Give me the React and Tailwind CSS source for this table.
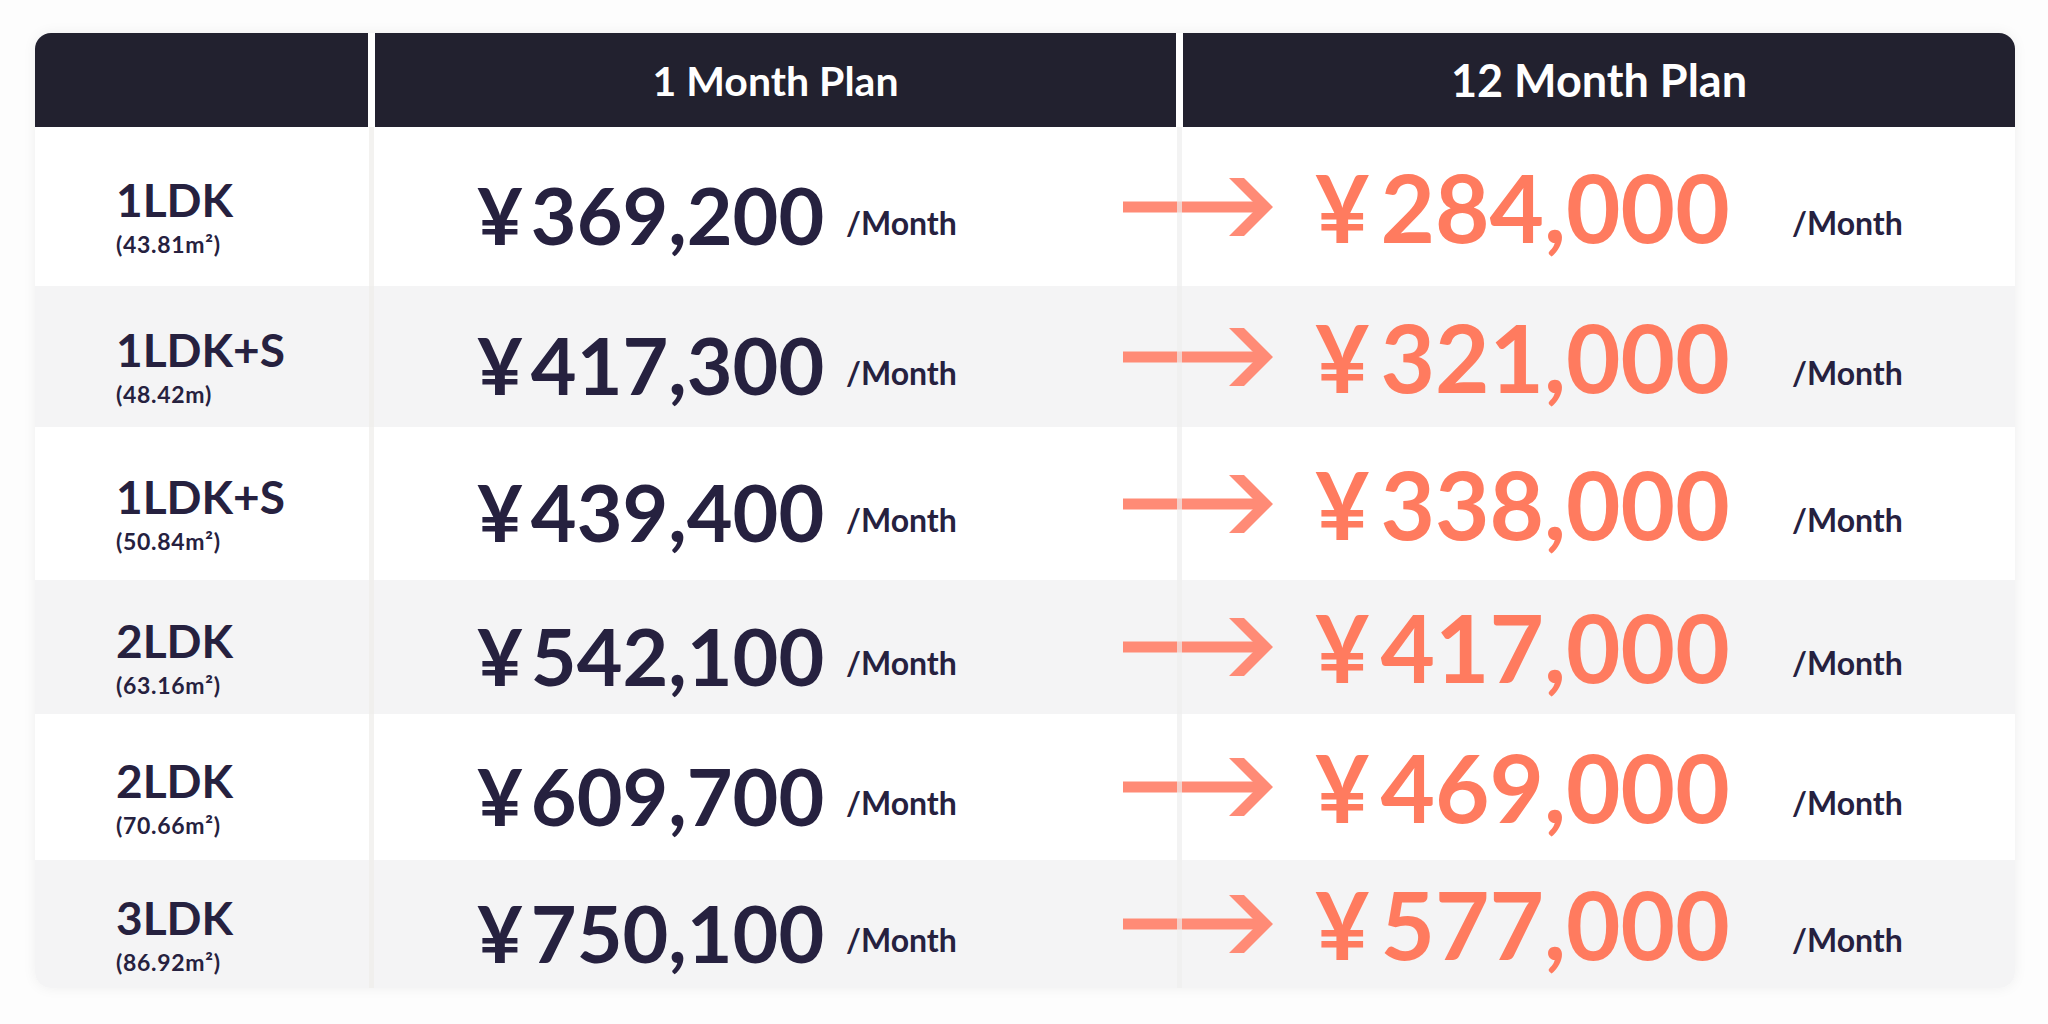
import React from 'react';

const rows = [
  { type: '1LDK', size: '(43.81m²)', month: '369,200', year: '284,000', h: 'h-[159px]', bg: 'bg-white' },
  { type: '1LDK+S', size: '(48.42m)', month: '417,300', year: '321,000', h: 'h-[141px]', bg: 'bg-[#f4f4f5]' },
  { type: '1LDK+S', size: '(50.84m²)', month: '439,400', year: '338,000', h: 'h-[153px]', bg: 'bg-white' },
  { type: '2LDK', size: '(63.16m²)', month: '542,100', year: '417,000', h: 'h-[134px]', bg: 'bg-[#f4f4f5]' },
  { type: '2LDK', size: '(70.66m²)', month: '609,700', year: '469,000', h: 'h-[146px]', bg: 'bg-white' },
  { type: '3LDK', size: '(86.92m²)', month: '750,100', year: '577,000', h: 'h-[128px]', bg: 'bg-[#f4f4f5]' },
];

function Arrow() {
  return (
    <svg width="152" height="62" viewBox="0 0 152 62" className="block">
      <rect x="0" y="25.5" width="140" height="11" fill="#ff8b76" />
      <polygon points="106,2 121,2 150,31 121,60 106,60 135,31" fill="#ff8b76" />
    </svg>
  );
}

export default function App() {
  return (
    <div className="min-h-screen w-full bg-[#fdfdfd] pt-[33px] pl-[35px]" style={{ fontFamily: 'Lato, "Noto Sans", sans-serif' }}>
      <div className="relative w-[1980px] rounded-[16px] overflow-hidden bg-white shadow-[0_0_14px_rgba(0,0,0,0.06)]">
        {/* header */}
        <div className="grid grid-cols-[333px_801px_1fr] gap-x-[7px] bg-white">
          <div className="h-[94px] bg-[#22212f]" />
          <div className="h-[94px] bg-[#22212f] flex items-center justify-center text-white text-[41px] font-bold leading-none">
            1 Month Plan
          </div>
          <div className="h-[94px] bg-[#22212f] flex items-center justify-center text-white text-[45px] font-bold leading-none">
            12 Month Plan
          </div>
        </div>

        {/* body */}
        <div className="relative">
          {rows.map((r, i) => (
            <div key={i} className={`grid grid-cols-[442px_369px_277px_192px_477px_1fr] items-center ${r.h} ${r.bg}`}>
              <div className="pl-[81px] pt-[20px] flex flex-col text-[#26213f]">
                <span className="text-[46px] font-bold leading-none">{r.type}</span>
                <span className="mt-[10px] text-[23px] font-bold leading-none tracking-[0.7px]">{r.size}</span>
              </div>
              <div className="pt-[16px] flex items-baseline text-[#26213f] font-bold leading-none">
                <span className="text-[79px] mr-[8px]">¥</span>
                <span className="text-[79px]">{r.month}</span>
              </div>
              <div className="pt-[32px] text-[32px] font-bold leading-none text-[#26213f]">/Month</div>
              <div className="flex items-center">
                <Arrow />
              </div>
              <div className="flex items-baseline text-[#ff7b5f] font-bold leading-none">
                <span className="text-[94px] mr-[11px]">¥</span>
                <span className="text-[94px]">{r.year}</span>
              </div>
              <div className="pt-[32px] text-[32px] font-bold leading-none text-[#26213f]">/Month</div>
            </div>
          ))}
          <div className="absolute top-0 bottom-0 left-[334px] w-[5px] bg-[#eeece9]/70" />
          <div className="absolute top-0 bottom-0 left-[1142px] w-[5px] bg-[#eeeeee]/70" />
        </div>
      </div>
    </div>
  );
}
